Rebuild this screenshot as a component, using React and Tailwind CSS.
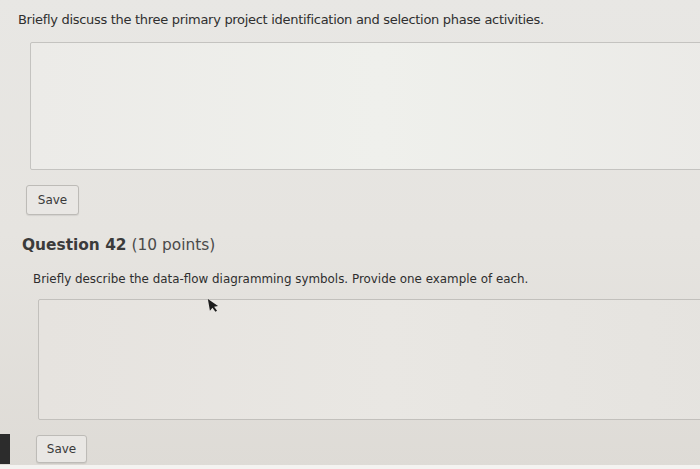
const SaveButton = ({ className }) => (
  <button
    className={`rounded-[3px] border border-[#bdbbb7] bg-[#e9e7e4] text-[12px] text-[#3a3a3a] shadow-[0_1px_1px_rgba(0,0,0,0.08)] ${className}`}
  >
    Save
  </button>
);

const App = () => {
  return (
    <div
      className="relative w-[700px] h-[469px] overflow-hidden bg-gradient-to-b from-[#e8e7e4] via-[#e6e4e0] to-[#dedbd6]"
      style={{ fontFamily: '"DejaVu Sans", Verdana, sans-serif' }}
    >
      {/* question 41 tail */}
      <p className="pl-[18px] pt-[12px] text-[13px] leading-[16px] text-[#2f2f2f] tracking-[-0.3px]">
        Briefly discuss the three primary project identification and selection phase activities.
      </p>
      <div className="ml-[30px] mt-[14px] w-[700px] h-[128px] rounded-[2px] border border-[#c4c3c0] bg-gradient-to-r from-[#ecebe8] via-[#eff0ec] to-[#ebeae7]" />
      <SaveButton className="ml-[26px] mt-[15px] w-[53px] h-[30px]" />

      {/* question 42 */}
      <h2 className="pl-[22px] mt-[20px] text-[15.4px] leading-[20px] text-[#3b3b3b]">
        <span className="font-bold">Question 42</span>{" "}
        <span className="text-[#4a4a4a]">(10 points)</span>
      </h2>
      <p className="pl-[33px] mt-[16px] text-[11.9px] leading-[16px] text-[#2e2e2e]">
        Briefly describe the data-flow diagramming symbols. Provide one example of each.
      </p>
      <div className="ml-[38px] mt-[12px] w-[700px] h-[121px] rounded-[2px] border border-[#c2c0bc] bg-gradient-to-r from-[#e6e3df] via-[#e9e7e3] to-[#e5e3df]" />
      <div className="flex items-center mt-[14px]">
        <div className="w-[10px] h-[30px] bg-[#2c2c2c]" />
        <SaveButton className="ml-[26px] w-[51px] h-[28px]" />
      </div>
      <div className="absolute left-0 right-0 bottom-0 h-[4px] bg-[#f4f3f1]" />

      {/* mouse pointer */}
      <svg
        className="absolute left-[208px] top-[297px] -rotate-[10deg]"
        width="11"
        height="16"
        viewBox="0 0 11 16"
      >
        <path d="M1 1 L1 13 L4 10.5 L6.2 15 L8 14.2 L5.8 9.8 L9.8 9.8 Z" fill="#1c1c1c" />
      </svg>
    </div>
  );
};

export default App;
